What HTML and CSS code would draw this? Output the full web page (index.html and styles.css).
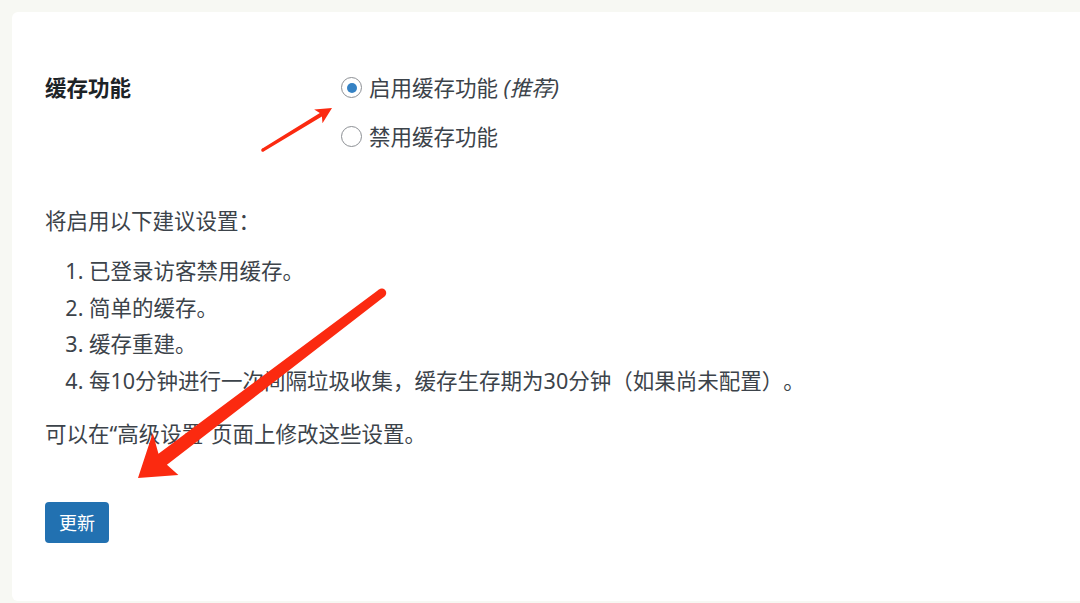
FILE: index.html
```html
<!DOCTYPE html>
<html lang="zh-CN">
<head>
  <meta charset="UTF-8" />
  <meta name="viewport" content="width=device-width, initial-scale=1.0"/>
  <title>缓存设置</title>
  <link rel="stylesheet" href="styles.css">
</head>
<body>
  <main class="card">
    <!-- Caching on/off -->
    <div class="settings-row">
      <div class="row-label">缓存功能</div>
      <div class="row-options">
        <label class="radio-line">
          <span class="radio checked"></span>
          <span>启用缓存功能 <em>(推荐)</em></span>
        </label>
        <label class="radio-line">
          <span class="radio"></span>
          <span>禁用缓存功能</span>
        </label>
      </div>
    </div>

    <p class="intro">将启用以下建议设置：</p>
    <ol class="suggestions">
      <li>已登录访客禁用缓存。</li>
      <li>简单的缓存。</li>
      <li>缓存重建。</li>
      <li>每10分钟进行一次间隔垃圾收集，缓存生存期为30分钟（如果尚未配置）。</li>
    </ol>
    <p class="note">可以在“高级设置”页面上修改这些设置。</p>

    <button class="update-btn">更新</button>

    <!-- annotation arrows -->
    <svg class="arrows" width="1080" height="603" viewBox="0 0 1080 603">
      <g fill="#fb2a10" transform="translate(332 108) rotate(148.7)">
        <polygon points="0,0 16,-8 13,-2 81,-1.6 81,1.6 13,2 16,8" />
        <circle cx="81" cy="0" r="1.6" />
      </g>
      <g fill="#fb2a10" transform="translate(138 478) rotate(-37.2)">
        <polygon points="0,0 39,-27 31,-7 306,-4.5 306,4.5 31,7 34,22" />
        <circle cx="306" cy="0" r="4.5" />
      </g>
    </svg>
  </main>
</body>
</html>
```

FILE: styles.css
```css
body {
  margin: 0;
  background-color: #f7f8f3;
  font-family: "Noto Sans", "Noto Sans CJK SC", sans-serif;
  color: #3c434a;
  font-size: 21.5px;
  text-spacing-trim: space-all;
  overflow: hidden;
}
.card {
  position: relative;
  margin: 12px 0 0 12px;
  height: 589px;
  background: #fff;
  border-radius: 6px 0 0 6px;
  padding: 0 0 0 33px;
  box-sizing: border-box;
}
.settings-row {
  display: flex;
  padding-top: 61px;
}
.row-label {
  width: 296px;
  line-height: 29px;
  font-weight: bold;
  color: #1d2327;
}
.row-options {
  display: flex;
  flex-direction: column;
  gap: 20px;
}
.radio-line {
  display: flex;
  align-items: center;
  gap: 7px;
  line-height: 29px;
}
.radio-line em {
  font-style: italic;
}
.radio {
  width: 21px;
  height: 21px;
  box-sizing: border-box;
  border: 1px solid #8c8f94;
  border-radius: 50%;
  display: flex;
  align-items: center;
  justify-content: center;
}
.radio.checked::after {
  content: "";
  width: 10px;
  height: 10px;
  border-radius: 50%;
  background: #3582c4;
}
.intro {
  margin: 55px 0 0;
  line-height: 29px;
}
.suggestions {
  margin: 18px 0 0;
  padding-left: 44px;
}
.suggestions li {
  line-height: 36.7px;
}
.note {
  margin: 19px 0 0;
  line-height: 29px;
}
.update-btn {
  margin-top: 54px;
  height: 41px;
  padding: 0 14px;
  border: none;
  border-radius: 4px;
  background-color: #2271b1;
  color: #fff;
  font-family: inherit;
  font-size: 18px;
}
.arrows {
  position: absolute;
  left: -12px;
  top: -12px;
  pointer-events: none;
}
```
